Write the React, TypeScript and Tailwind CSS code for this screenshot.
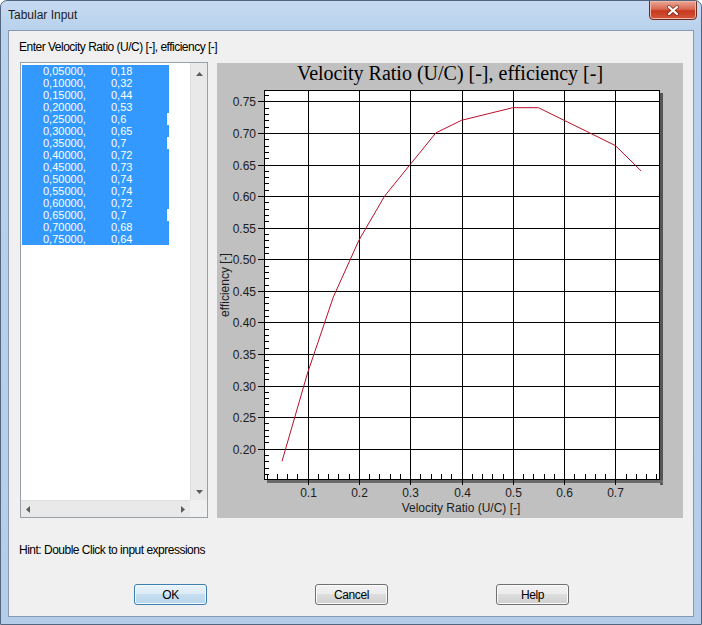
import React from "react";

const ROWS: [string, string][] = [
  ["0,05000,", "0,18"],
  ["0,10000,", "0,32"],
  ["0,15000,", "0,44"],
  ["0,20000,", "0,53"],
  ["0,25000,", "0,6"],
  ["0,30000,", "0,65"],
  ["0,35000,", "0,7"],
  ["0,40000,", "0,72"],
  ["0,45000,", "0,73"],
  ["0,50000,", "0,74"],
  ["0,55000,", "0,74"],
  ["0,60000,", "0,72"],
  ["0,65000,", "0,7"],
  ["0,70000,", "0,68"],
  ["0,75000,", "0,64"],
];

const num = (s: string) => parseFloat(s.replace(/,$/, "").replace(",", "."));
const POINTS = ROWS.map(([a, b]) => [num(a), num(b)] as const);

function Arrow({ dir }: { dir: "up" | "down" | "left" | "right" }) {
  const vertical = dir === "up" || dir === "down";
  const pts = {
    up: "0,4 3.5,0 7,4",
    down: "0,0 3.5,4 7,0",
    left: "4,0 0,3.5 4,7",
    right: "0,0 4,3.5 0,7",
  }[dir];
  return (
    <svg width={vertical ? 7 : 4} height={vertical ? 4 : 7} viewBox={vertical ? "0 0 7 4" : "0 0 4 7"}>
      <polygon points={pts} fill="#5c5c5c" />
    </svg>
  );
}

function Chart() {
  const L = 47, T = 1, R = 442, B = 390;
  const sx = (v: number) => L + ((v - 0.015) / 0.77) * (R - L);
  const sy = (v: number) => T + ((0.768 - v) / 0.616) * (B - T);
  const p = (n: number) => Math.round(n) + 0.5;

  const yMajor = Array.from({ length: 12 }, (_, i) => 0.2 + i * 0.05);
  const yMinor = Array.from({ length: 61 }, (_, i) => 16 + i)
    .filter((c) => c % 5 !== 0)
    .map((c) => c / 100);
  const xMajor = Array.from({ length: 7 }, (_, i) => (i + 1) / 10);
  const xMinor = Array.from({ length: 39 }, (_, i) => i + 1)
    .filter((i) => i % 5 !== 0)
    .map((i) => i * 0.02);

  const line = POINTS.map(([x, y]) => `${sx(x).toFixed(1)},${sy(y).toFixed(1)}`).join(" ");

  return (
    <svg width={466} height={429} className="block" fontFamily="'Liberation Sans', Arial, sans-serif">
      {/* shadow */}
      <rect x={R + 1} y={T + 3} width={3} height={B - T + 3} fill="#555555" />
      <rect x={L + 3} y={B + 1} width={R - L + 1} height={3} fill="#6a6a6a" />
      <rect x={L} y={T} width={R - L} height={B - T} fill="#ffffff" />

      {yMajor.map((v) => (
        <g key={"ym" + v}>
          <line x1={L - 6} x2={R} y1={p(sy(v))} y2={p(sy(v))} stroke="#000" />
          <text x={L - 8} y={p(sy(v)) + 4} fontSize={12} textAnchor="end" fill="#1c1c1c">
            {v.toFixed(2)}
          </text>
        </g>
      ))}
      {yMinor.map((v) => (
        <line key={"yn" + v} x1={L} x2={L + 5} y1={p(sy(v))} y2={p(sy(v))} stroke="#000" />
      ))}
      {xMajor.map((v) => (
        <g key={"xm" + v}>
          <line x1={p(sx(v))} x2={p(sx(v))} y1={T} y2={B + 6} stroke="#000" />
          <text x={p(sx(v))} y={408} fontSize={12} textAnchor="middle" fill="#1c1c1c">
            {v.toFixed(1)}
          </text>
        </g>
      ))}
      {xMinor.map((v) => (
        <line key={"xn" + v} x1={p(sx(v))} x2={p(sx(v))} y1={B - 5} y2={B} stroke="#000" />
      ))}

      <rect x={L + 0.5} y={T + 0.5} width={R - L} height={B - T} fill="none" stroke="#000" />

      <polyline points={line} fill="none" stroke="#b80f2a" strokeWidth={1} />

      <text x={244} y={423} fontSize={12} textAnchor="middle" fill="#1c1c1c">
        Velocity Ratio (U/C) [-]
      </text>
      <text transform="translate(12 196) rotate(-90)" fontSize={12} textAnchor="middle" fill="#1c1c1c">
        efficiency [-]
      </text>
    </svg>
  );
}

function Btn({ label, primary }: { label: string; primary?: boolean }) {
  return (
    <div
      className={
        primary
          ? "w-[73px] h-[21px] rounded-[3px] border border-[#3c7fb1] bg-[linear-gradient(to_bottom,#e9f3fa_0%,#dbeaf5_50%,#c6def0_50%,#b9d6ec_100%)] shadow-[inset_0_0_0_1px_#f4faff] flex items-center justify-center text-[12px] tracking-[-0.4px] text-black"
          : "w-[73px] h-[21px] rounded-[3px] border border-[#707070] bg-[linear-gradient(to_bottom,#f2f2f2_0%,#ebebeb_50%,#dddddd_50%,#cfcfcf_100%)] shadow-[inset_0_0_0_1px_#fbfbfb] flex items-center justify-center text-[12px] tracking-[-0.4px] text-black"
      }
    >
      {label}
    </div>
  );
}

export default function App() {
  return (
    <div className="w-[702px] h-[625px] flex flex-col overflow-hidden rounded-t-[7px] border border-[#53667f] bg-[linear-gradient(to_bottom,#c6daf1_0px,#b9d1ed_30px,#b6cdea_100%)] font-['Liberation_Sans',Arial,sans-serif]">
      {/* title bar */}
      <div className="h-[29px] flex items-start justify-between shrink-0">
        <div className="pl-[7px] pt-[7px] text-[12px] leading-[14px] text-[#1b1b1b]">Tabular Input</div>
        <div className="-mt-[1px] mr-[4px] w-[48px] h-[20px] rounded-b-[4px] border border-[#6b2a22] bg-[linear-gradient(to_bottom,#eaa796_0%,#d96a52_45%,#c8381f_55%,#d0583b_100%)] shadow-[inset_0_0_0_1px_#f3b7a8] flex items-center justify-center">
          <svg width="14" height="11" viewBox="0 0 14 11">
            <path d="M3 2 L11 9 M11 2 L3 9" stroke="#5a1a12" strokeWidth="4" strokeLinecap="round" opacity="0.55" />
            <path d="M3 2 L11 9 M11 2 L3 9" stroke="#ffffff" strokeWidth="2.2" strokeLinecap="round" />
          </svg>
        </div>
      </div>

      {/* client area */}
      <div className="mx-[7px] h-[587px] shrink-0 border border-[#8599b3] bg-[#f0f0f0] flex flex-col">
        <div className="pt-[9px] pl-[10px] h-[23px] text-[12px] leading-[14px] tracking-[-0.5px] text-black">
          Enter Velocity Ratio (U/C) [-], efficiency [-]
        </div>

        <div className="mt-[8px] h-[456px] flex pl-[11px] gap-[9px]">
          {/* list box */}
          <div className="w-[188px] h-[456px] border border-[#9aa0a8] bg-white flex flex-col">
            <div className="flex-1 flex">
              <div className="flex-1 pt-[2px] pl-[1px]">
                {ROWS.map(([a, b], i) => (
                  <div
                    key={i}
                    className={
                      b.length === 3
                        ? "w-[145px] h-[12px] bg-[#3399ff] flex text-white text-[11px] leading-[12px] pl-[21px]"
                        : "w-[147px] h-[12px] bg-[#3399ff] flex text-white text-[11px] leading-[12px] pl-[21px]"
                    }
                  >
                    <span className="w-[68px]">{a}</span>
                    <span>{b}</span>
                  </div>
                ))}
              </div>
              <div className="w-[17px] bg-[#e9e9e9] border-l border-[#dedede] flex flex-col justify-between items-center">
                <div className="h-[20px] flex items-center justify-center pt-[1px]">
                  <Arrow dir="up" />
                </div>
                <div className="h-[17px] flex items-center justify-center">
                  <Arrow dir="down" />
                </div>
              </div>
            </div>
            <div className="h-[17px] flex">
              <div className="flex-1 bg-[#e9e9e9] border-t border-[#dedede] flex items-center justify-between px-[5px]">
                <Arrow dir="left" />
                <Arrow dir="right" />
              </div>
              <div className="w-[17px] bg-[#f0f0f0]" />
            </div>
          </div>

          {/* chart panel */}
          <div className="mt-[1px] w-[466px] h-[455px] bg-[#c0c0c0] flex flex-col">
            <div className="h-[26px] text-center text-[20px] leading-[20px] text-black font-['Liberation_Serif','Times_New_Roman',serif]">
              Velocity Ratio (U/C) [-], efficiency [-]
            </div>
            <Chart />
          </div>
        </div>

        <div className="mt-[25px] pl-[10px] h-[14px] text-[12px] leading-[14px] tracking-[-0.5px] text-black">
          Hint: Double Click to input expressions
        </div>

        <div className="mt-[27px] pl-[125px] flex gap-[108px]">
          <Btn label="OK" primary />
          <Btn label="Cancel" />
          <Btn label="Help" />
        </div>
      </div>
    </div>
  );
}
